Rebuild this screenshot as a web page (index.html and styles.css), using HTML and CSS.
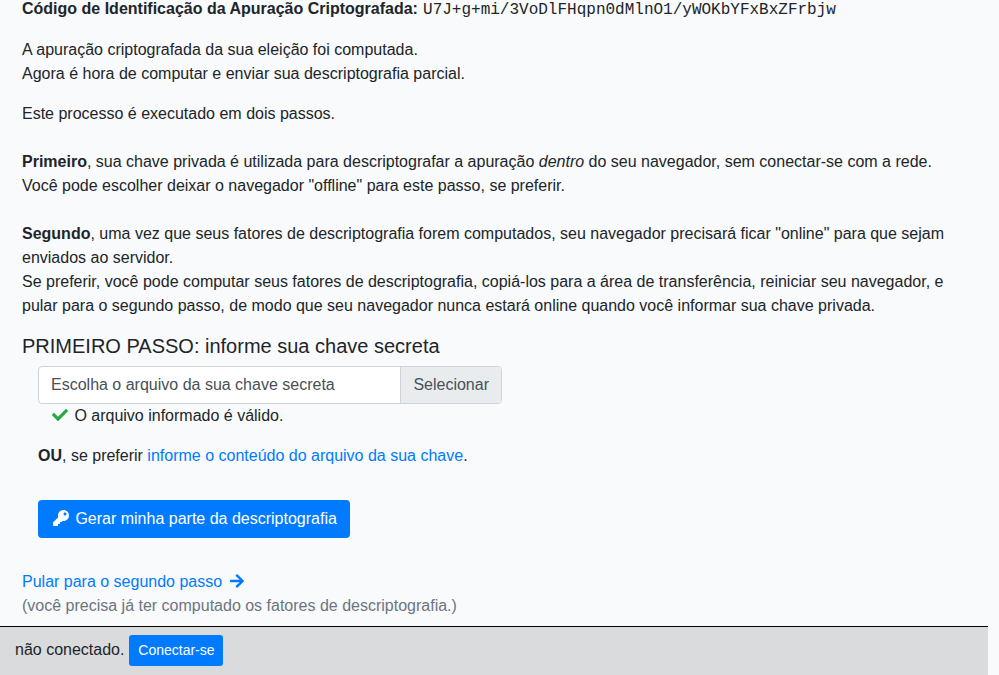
FILE: index.html
```html
<!DOCTYPE html>
<html lang="pt-BR">
<head>
<meta charset="utf-8">
<title>Descriptografia parcial</title>
<link rel="stylesheet" href="styles.css">
</head>
<body>
<main class="content">
  <p><b>Código de Identificação da Apuração Criptografada:</b> <span class="hash">U7J+g+mi/3VoDlFHqpn0dMlnO1/yWOKbYFxBxZFrbjw</span></p>
  <p>A apuração criptografada da sua eleição foi computada.<br>Agora é hora de computar e enviar sua descriptografia parcial.</p>
  <p>Este processo é executado em dois passos.</p>
  <p class="explanation"><b>Primeiro</b>, sua chave privada é utilizada para descriptografar a apuração <em>dentro</em> do seu navegador, sem conectar-se com a rede.<br>Você pode escolher deixar o navegador "offline" para este passo, se preferir.</p>
  <p class="explanation"><b>Segundo</b>, uma vez que seus fatores de descriptografia forem computados, seu navegador precisará ficar "online" para que sejam enviados ao servidor.<br>Se preferir, você pode computar seus fatores de descriptografia, copiá-los para a área de transferência, reiniciar seu navegador, e pular para o segundo passo, de modo que seu navegador nunca estará online quando você informar sua chave privada.</p>
  <h5>PRIMEIRO PASSO: informe sua chave secreta</h5>
  <section class="step">
    <div class="file"><span class="file-name">Escolha o arquivo da sua chave secreta</span><span class="file-button">Selecionar</span></div>
    <div class="valid"><svg class="check" viewBox="0 0 512 512"><path d="M173.898 439.404l-166.4-166.4c-9.997-9.997-9.997-26.206 0-36.204l36.203-36.204c9.997-9.998 26.207-9.998 36.204 0L192 312.69 432.095 72.596c9.997-9.997 26.207-9.997 36.204 0l36.203 36.204c9.997 9.997 9.997 26.206 0 36.204l-294.4 294.401c-9.998 9.997-26.207 9.997-36.204-.001z"/></svg><span>O arquivo informado é válido.</span></div>
    <p class="alternative"><b>OU</b>, se preferir <a href="#">informe o conteúdo do arquivo da sua chave</a>.</p>
    <button class="button generate"><svg class="key" viewBox="0 0 512 512"><path d="M512 176.001C512 273.203 433.202 352 336 352c-11.22 0-22.19-1.062-32.827-3.069l-24.012 27.014A23.999 23.999 0 0 1 261.223 384H224v40c0 13.255-10.745 24-24 24h-40v40c0 13.255-10.745 24-24 24H24c-13.255 0-24-10.745-24-24v-78.059c0-6.365 2.529-12.47 7.029-16.971l161.802-161.802C163.108 213.814 160 195.271 160 176 160 78.798 238.797.001 335.999 0 433.488-.001 512 78.511 512 176.001zM336 128c0 26.51 21.49 48 48 48s48-21.49 48-48-21.49-48-48-48-48 21.49-48 48z"/></svg>Gerar minha parte da descriptografia</button>
  </section>
  <div class="skip"><a href="#">Pular para o segundo passo<svg class="arrow" viewBox="0 0 448 512"><path d="M190.5 66.9l22.2-22.2c9.4-9.4 24.6-9.4 33.9 0L441 239c9.4 9.4 9.4 24.6 0 33.9L246.6 467.3c-9.4 9.4-24.6 9.4-33.9 0l-22.2-22.2c-9.5-9.5-9.3-25 .4-34.3L311.4 296H24c-13.3 0-24-10.7-24-24v-32c0-13.3 10.7-24 24-24h287.4L190.9 101.2c-9.8-9.3-10-24.8-.4-34.3z"/></svg></a></div>
  <div class="muted">(você precisa já ter computado os fatores de descriptografia.)</div>
</main>
<footer class="footer"><span>não conectado.</span><button class="button connect">Conectar-se</button></footer>
</body>
</html>
```
FILE: styles.css
```css
* { box-sizing: border-box; }
body {
  margin: 0;
  height: 675px;
  overflow: hidden;
  display: flex;
  flex-direction: column;
  background: #f8fafc;
  color: #212529;
  font: 16px/24px "Liberation Sans", Arial, sans-serif;
}
.content { width: 988px; flex: none; padding: 0 37px 0 22px; margin-top: -3px; height: 629px; }
p { margin: 0 0 16px; }
.explanation { margin-top: 24px; }
a { color: #007bff; text-decoration: none; }
svg { fill: currentColor; }
.hash { font-family: "Liberation Mono", monospace; margin-left: 0.7px; }
h5 { margin: 0 0 8px; font-size: 20px; line-height: 24px; font-weight: 400; }
.step { padding-left: 16px; }
.file {
  display: flex;
  width: 464px;
  height: 38px;
  border: 1px solid #ced4da;
  border-radius: 4px;
  background: #fff;
  color: #495057;
  line-height: 36px;
  overflow: hidden;
}
.file-name { flex: 1; padding-left: 12px; }
.file-button { padding: 0 12px; background: #e9ecef; border-left: 1px solid #ced4da; }
.valid { display: flex; align-items: flex-start; gap: 6.4px; height: 24px; padding-left: 14px; margin-bottom: 16px; }
.check { width: 16px; height: 16px; margin-top: 3px; color: #28a745; }
.alternative { margin-bottom: 32px; }
.button { border: 0; background: #007bff; color: #fff; font-family: inherit; }
.generate { display: flex; align-items: center; height: 38px; width: 312px; padding: 0 12px 0 15px; border-radius: 4px; font-size: 16px; gap: 6.4px; white-space: nowrap; }
.key { width: 16px; height: 16px; flex: none; margin-bottom: 2px; }
.skip { margin-top: 32px; height: 24px; }
.arrow { width: 14px; height: 16px; margin-left: 8px; vertical-align: -2px; }
.muted { color: #6c757d; }
.footer { display: flex; align-items: flex-start; width: 988px; height: 49px; flex: none; padding: 8px 15px; gap: 5px; border-top: 1px solid #000; background: #dadbdd; line-height: 30px; }
.connect { height: 31px; width: 94px; padding: 0; border-radius: 3px; font-size: 14px; line-height: 21px; }
```
